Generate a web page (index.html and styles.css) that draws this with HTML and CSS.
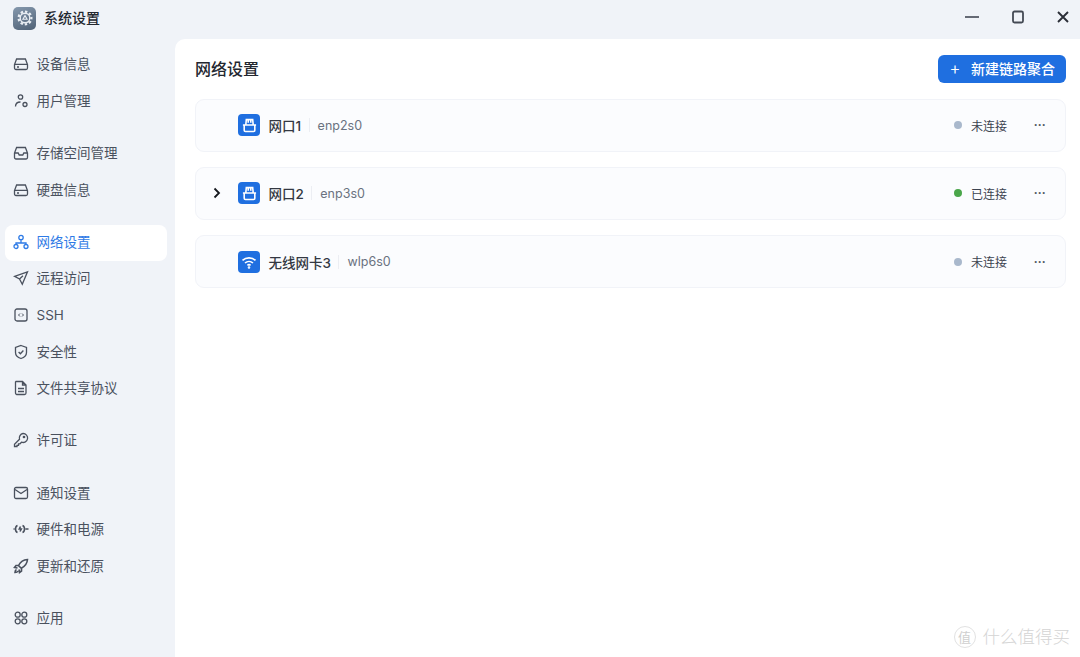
FILE: index.html
```html
<!DOCTYPE html>
<html lang="zh-CN">
<head>
<meta charset="utf-8">
<title>系统设置</title>
<link rel="stylesheet" href="styles.css">
</head>
<body>
<div class="app">
  <header class="titlebar">
    <div class="brand">
      <span class="app-icon">
        <svg width="18" height="18" viewBox="0 0 18 18" fill="none" stroke="#e8edf3"><path stroke-width="2.2" stroke-dasharray="2.4 1.95" d="M9 2.6a6.4 6.4 0 1 1 0 12.8a6.4 6.4 0 1 1 0-12.8z"/><circle cx="9" cy="9" r="4.8" stroke-width="1.4"/><path stroke-width="1.1" d="M9 6.6l2.1 3.6H6.9z"/></svg>
      </span>
      <span class="app-name">系统设置</span>
    </div>
    <div class="win-controls">
      <svg class="win-min" width="14" height="14" viewBox="0 0 14 14"><path d="M0 7h14" stroke="#555b66" stroke-width="1.8"/></svg>
      <svg class="win-max" width="14" height="14" viewBox="0 0 14 14" fill="none"><rect x="2" y="1.5" width="10" height="11" rx="1.5" stroke="#444a54" stroke-width="1.8"/></svg>
      <svg class="win-close" width="14" height="14" viewBox="0 0 14 14"><path d="M2 2l10 10M12 2L2 12" stroke="#2b2f38" stroke-width="1.9"/></svg>
    </div>
  </header>
  <div class="body">
    <nav class="sidebar">
      <div class="nav-group">
        <a class="nav-item"><svg class="nav-icon" viewBox="0 0 16 16"><path d="M3.600 3h8.800l2.100 5.500V12a1.500 1.500 0 0 1-1.500 1.500h-10A1.500 1.500 0 0 1 1.500 12V8.500zM1.800 8.300h12.400M4 11h2"/></svg>设备信息</a>
        <a class="nav-item"><svg class="nav-icon" viewBox="0 0 16 16"><circle cx="7.500" cy="4" r="2.200"/><path d="M2.500 13.500c0-2.800 2-4.500 5-4.500"/><circle cx="12" cy="11.500" r="2"/></svg>用户管理</a>
      </div>
      <div class="nav-group">
        <a class="nav-item"><svg class="nav-icon" viewBox="0 0 16 16"><path d="M3.600 2.500h8.800l2.100 5.500v4.500a1.500 1.500 0 0 1-1.500 1.500h-10a1.500 1.500 0 0 1-1.500-1.500V8zM1.800 8h3.400l1 2h3.600l1-2h3.400"/></svg>存储空间管理</a>
        <a class="nav-item"><svg class="nav-icon" viewBox="0 0 16 16"><path d="M3.600 3h8.800l2.100 5.500V12a1.500 1.500 0 0 1-1.500 1.500h-10A1.500 1.500 0 0 1 1.500 12V8.500zM1.800 8.300h12.400M4 11h2"/></svg>硬盘信息</a>
      </div>
      <div class="nav-group">
        <a class="nav-item active"><svg class="nav-icon" viewBox="0 0 16 16"><circle cx="8" cy="3.500" r="2.200"/><circle cx="3" cy="12.500" r="2"/><circle cx="13" cy="12.500" r="2"/><path d="M8 5.700V9M3 10.500V9h10v1.500"/></svg>网络设置</a>
        <a class="nav-item"><svg class="nav-icon" viewBox="0 0 16 16"><path d="M14.500 1.800L1.500 6.300l5 2.700 2.800 5.200zM6.500 9l3.500-3.200"/></svg>远程访问</a>
        <a class="nav-item"><svg class="nav-icon" viewBox="0 0 16 16"><rect x="2" y="2" width="12" height="12" rx="2"/><path d="M7 6.500L5.500 8 7 9.500M9 6.500L10.500 8 9 9.500" stroke-width="1"/></svg>SSH</a>
        <a class="nav-item"><svg class="nav-icon" viewBox="0 0 16 16"><path d="M8 1.500l5.500 2v5c0 3-2.500 5-5.500 6-3-1-5.500-3-5.500-6v-5zM5.600 8l1.800 1.800 3-3.300"/></svg>安全性</a>
        <a class="nav-item"><svg class="nav-icon" viewBox="0 0 16 16"><path d="M3 1.500h6.500L13 5v8a1.500 1.500 0 0 1-1.500 1.500h-8A1.500 1.500 0 0 1 2.500 13V2zM9.500 1.500V5H13M5 8.500h6M5 11.500h6"/></svg>文件共享协议</a>
      </div>
      <div class="nav-group">
        <a class="nav-item"><svg class="nav-icon" viewBox="0 0 16 16"><path d="M10 1.500a4.500 4.500 0 1 1-1.500 8.700L7 11.800H5.500v1.500H4v1.200H1.500v-2.300l5-5A4.500 4.500 0 0 1 10 1.500z"/><circle cx="11" cy="5" r=".7"/></svg>许可证</a>
      </div>
      <div class="nav-group">
        <a class="nav-item"><svg class="nav-icon" viewBox="0 0 16 16"><rect x="1.500" y="2.500" width="13" height="11" rx="1.500"/><path d="M2 4.500l6 4 6-4"/></svg>通知设置</a>
        <a class="nav-item"><svg class="nav-icon nav-icon-bold" viewBox="0 0 16 16"><path d="M4.500 4.500C3 5 2.500 6.500 2.500 8s.5 3 2 3.500M9.500 4.500c1.500.5 2 2 2 3.500s-.5 3-2 3.500M7.500 5.500L6.300 8h2L7 10.500M.5 8h1M12.500 8h3"/></svg>硬件和电源</a>
        <a class="nav-item"><svg class="nav-icon nav-icon-bold" viewBox="0 0 16 16"><path d="M14.500 1.500c-4 .2-7 2.200-9 6l2.800 2.800c3.800-2 5.900-5 6.200-8.800zM5.500 7.500H3L1.500 9.500l3 .5M8.500 10.500V13l-2 1.500-.5-3M3.500 11.500c-1 .5-1.500 1.800-1.500 3 1.200 0 2.500-.5 3-1.500"/></svg>更新和还原</a>
      </div>
      <div class="nav-group">
        <a class="nav-item"><svg class="nav-icon" viewBox="0 0 16 16"><circle cx="4.700" cy="4.700" r="2.500"/><circle cx="11.300" cy="4.700" r="2.500"/><circle cx="4.700" cy="11.300" r="2.500"/><circle cx="11.300" cy="11.300" r="2.500"/></svg>应用</a>
      </div>
    </nav>
    <main class="panel">
      <div class="panel-head">
        <h1 class="panel-title">网络设置</h1>
        <button class="primary-btn"><span class="plus">+</span>新建链路聚合</button>
      </div>
      <div class="cards">
        <section class="card">
          <span class="chevron-slot"></span>
          <span class="port-icon"><svg width="17" height="17" viewBox="0 0 16 16" fill="none" stroke="#fff" stroke-width="1.500"><path d="M1.800 7.500h12.400M3 7.500v5a1.200 1.200 0 0 0 1.200 1.200h7.600a1.200 1.200 0 0 0 1.200-1.200v-5M4.500 7.500L5 2.500h6l.5 5M6.800 2.500v3M9.200 2.500v3"/></svg></span>
          <span class="card-name">网口1</span><span class="divider"></span><span class="card-dev">enp2s0</span>
          <span class="status"><i class="dot"></i>未连接</span>
          <span class="more">···</span>
        </section>
        <section class="card">
          <span class="chevron-slot"><svg width="10" height="12" viewBox="0 0 10 12" fill="none"><path d="M2.500 1.500L7 6l-4.500 4.500" stroke="#15181e" stroke-width="1.800"/></svg></span>
          <span class="port-icon"><svg width="17" height="17" viewBox="0 0 16 16" fill="none" stroke="#fff" stroke-width="1.500"><path d="M1.800 7.500h12.400M3 7.500v5a1.200 1.200 0 0 0 1.200 1.200h7.600a1.200 1.200 0 0 0 1.200-1.200v-5M4.500 7.500L5 2.500h6l.5 5M6.800 2.500v3M9.200 2.500v3"/></svg></span>
          <span class="card-name">网口2</span><span class="divider"></span><span class="card-dev">enp3s0</span>
          <span class="status"><i class="dot on"></i>已连接</span>
          <span class="more">···</span>
        </section>
        <section class="card">
          <span class="chevron-slot"></span>
          <span class="port-icon"><svg width="16" height="16" viewBox="0 0 16 16" fill="none" stroke="#fff" stroke-width="1.600"><path d="M1.500 6.300c3.700-3.300 9.300-3.300 13 0M4 9c2.300-2 5.700-2 8 0M6.400 11.300c1-.8 2.200-.8 3.200 0"/><circle cx="8" cy="13.500" r=".5"/></svg></span>
          <span class="card-name">无线网卡3</span><span class="divider"></span><span class="card-dev">wlp6s0</span>
          <span class="status"><i class="dot"></i>未连接</span>
          <span class="more">···</span>
        </section>
      </div>
      <div class="watermark">
        <span class="wm-logo">值</span><span class="wm-text">什么值得买</span>
      </div>
    </main>
  </div>
</div>
</body>
</html>
```
FILE: styles.css
```css
* { box-sizing: border-box; }
html, body { margin: 0; height: 100%; }
body {
  font-family: "Inter", "Noto Sans CJK SC", "Noto Sans", sans-serif;
  background: #f0f3f8;
  color: #3c4350;
  overflow: hidden;
}
.app { width: 1080px; height: 657px; display: flex; flex-direction: column; }
.titlebar { height: 39px; flex: none; display: flex; align-items: center; justify-content: space-between; }
.brand { display: flex; align-items: center; padding-left: 13px; gap: 8px; margin-top: -3px; }
.app-icon {
  width: 23px; height: 23px; border-radius: 5px;
  background: linear-gradient(160deg, #8598ad, #4f6176);
  display: flex; align-items: center; justify-content: center;
}
.app-name { font-size: 14px; font-weight: 500; color: #23272f; line-height: 20px; }
.win-controls { display: flex; align-items: center; margin-top: -6px; padding-right: 10px; gap: 31px; }
.win-controls svg { display: block; }
.win-min { margin-right: 1px; }
.body { flex: 1; display: flex; min-height: 0; }
.sidebar { width: 175px; flex: none; padding: 8px 8px 0 5px; display: flex; flex-direction: column; gap: 15.600px; }
.nav-group { display: flex; flex-direction: column; }
.nav-item {
  height: 36.600px; display: flex; align-items: center; gap: 8px;
  padding: 0 0 2px 7.500px; border-radius: 8px;
  font-size: 13.500px; color: #4a515e; line-height: 20px;
}
.nav-item.active { background: #fff; color: #2f7be6; }
.nav-icon { width: 16px; height: 16px; flex: none; fill: none; stroke: #4a515e; stroke-width: 1.300; }
.nav-icon-bold { stroke-width: 1.600; }
.active .nav-icon { stroke: #2f7be6; }
.panel { flex: 1; background: #fff; border-top-left-radius: 10px; padding: 16px 14px 0 20px; position: relative; }
.panel-head { display: flex; align-items: center; justify-content: space-between; height: 28px; }
.panel-title { margin: 0; font-size: 16px; font-weight: 500; color: #23272f; line-height: 27px; }
.primary-btn {
  width: 128px; height: 28px; border: 0; border-radius: 6px; background: #1f6fe0;
  color: #fff; font: 500 14px/26px "Noto Sans CJK SC", sans-serif;
  display: flex; align-items: center; padding: 0 0 2px 12px;
}
.plus { width: 21px; font-size: 16px; font-weight: 400; text-align: center; padding-right: 11px; }
.cards { margin-top: 16px; display: flex; flex-direction: column; gap: 15.700px; }
.card {
  height: 52.500px; display: flex; align-items: center;
  background: #fbfcfe; border: 1px solid #f1f3f8; border-radius: 9px;
  padding-left: 16px; padding-right: 18px;
}
.chevron-slot { width: 26px; display: flex; align-items: center; flex: none; }
.chevron-slot svg { display: block; }
.port-icon {
  width: 22px; height: 22px; border-radius: 4px; background: #1f6fe0; flex: none;
  display: flex; align-items: center; justify-content: center; margin-right: 8.500px;
}
.card-name { font-size: 13.500px; font-weight: 500; color: #333842; }
.divider { width: 1px; height: 14px; background: #eceef3; margin: 0 8px 0 7.500px; }
.card-dev { font-size: 12.500px; color: #6a7280; }
.status { margin-left: auto; display: flex; align-items: center; font-size: 12px; color: #3c4350; gap: 9px; }
.dot { width: 8px; height: 8px; border-radius: 50%; background: #a9b8cc; }
.dot.on { background: #4aa64a; }
.more { margin-left: 26px; width: 14px; font: 700 12px/14px "Liberation Sans", sans-serif; color: #555b66; text-align: center; }
.watermark { position: absolute; right: 10px; bottom: 8px; display: flex; align-items: center; gap: 7px; color: #d4d4d4; }
.wm-logo {
  width: 22px; height: 22px; border: 1px solid #e2e2e2; border-radius: 50%;
  font-size: 13px; line-height: 20px; text-align: center; color: #cfcfcf;
}
.wm-text { font-size: 17.500px; font-weight: 300; line-height: 24px; }
```
